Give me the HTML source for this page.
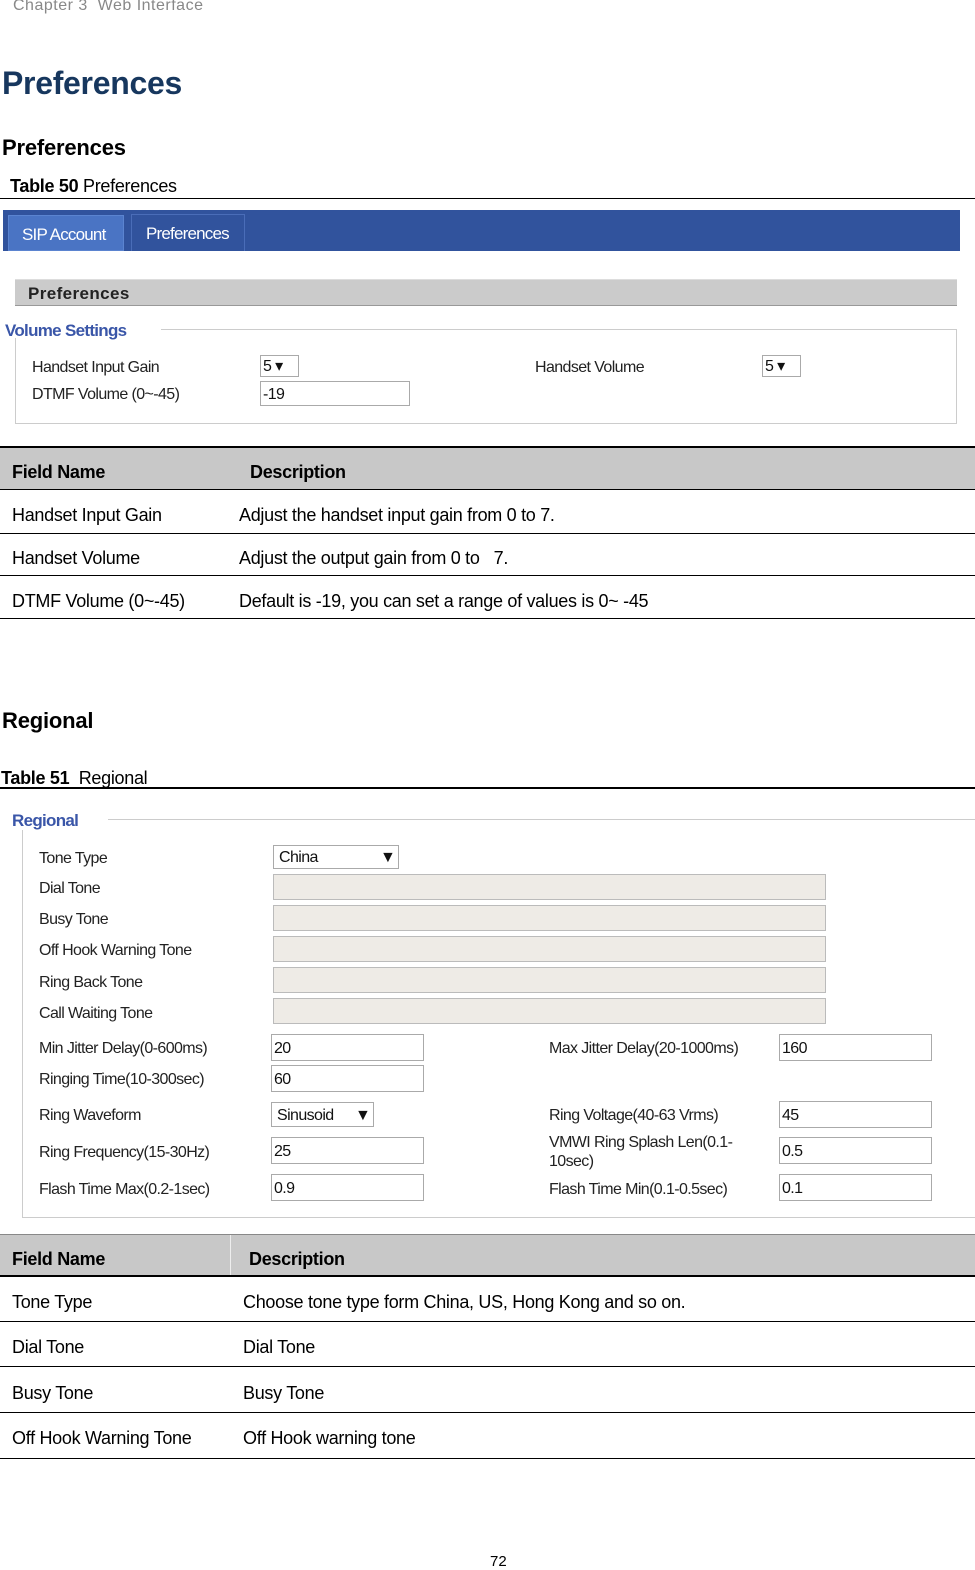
<!DOCTYPE html>
<html><head><meta charset="utf-8"><style>
*{margin:0;padding:0;box-sizing:border-box}
body{width:975px;height:1570px;background:#fff;position:relative;overflow:hidden;font-family:"Liberation Sans",sans-serif;color:#000}
.a{position:absolute;white-space:nowrap;line-height:1}
.d{font-size:18px;letter-spacing:-0.3px;margin-top:2px}
.u{font-size:16px;letter-spacing:-0.6px;color:#222;margin-top:1px}
.box{position:absolute;border:1px solid #aaa;background:#fff}
.gb{position:absolute;border:1px solid #bbb;background:#eeebe6}
.hl{position:absolute;height:1px;background:#000;left:0;width:975px}
.v{font-size:16px;letter-spacing:-0.6px;position:absolute;left:2px;top:3px;line-height:1;color:#111}
</style></head><body>
<div class="a" style="left:13px;top:-2px;font-size:16px;color:#888;letter-spacing:0.5px">Chapter 3&nbsp; Web Interface</div>
<div class="a" style="left:2px;top:67px;font-size:32px;font-weight:bold;color:#17375e;letter-spacing:-0.3px">Preferences</div>
<div class="a" style="left:2px;top:137px;font-size:22px;font-weight:bold;letter-spacing:-0.2px">Preferences</div>
<div class="a d" style="left:10px;top:175px"><b>Table 50</b> Preferences</div>
<div class="hl" style="top:198px"></div>

<div style="position:absolute;left:3px;top:210px;width:957px;height:41px;background:#31539d"></div>
<div style="position:absolute;left:8px;top:215px;width:116px;height:36px;background:#4a74c4;border:1px solid #5b84d0"></div>
<div style="position:absolute;left:131px;top:214px;width:114px;height:37px;background:#31539d;border:1px solid #4a6db8;border-bottom:none"></div>
<div class="a" style="left:22px;top:226px;font-size:17px;color:#fff;letter-spacing:-0.8px">SIP Account</div>
<div class="a" style="left:146px;top:225px;font-size:17px;color:#fff;letter-spacing:-0.8px">Preferences</div>

<div style="position:absolute;left:15px;top:279px;width:942px;height:27px;background:#cbcbcb;border-bottom:1px solid #999;border-top:1px solid #ddd"></div>
<div class="a" style="left:28px;top:285px;font-size:17px;font-weight:bold;color:#222;letter-spacing:0.4px">Preferences</div>

<div style="position:absolute;left:15px;top:329px;width:942px;height:95px;border:1px solid #ccc"></div>
<div style="position:absolute;left:3px;top:320px;width:158px;height:18px;background:#fff"></div>
<div class="a" style="left:5px;top:322px;font-size:17px;font-weight:bold;color:#3a56a8;letter-spacing:-0.7px">Volume Settings</div>
<div class="a u" style="left:32px;top:359px">Handset Input Gain</div>
<div class="a u" style="left:32px;top:386px">DTMF Volume (0~-45)</div>
<div class="a u" style="left:535px;top:359px">Handset Volume</div>
<div class="box" style="left:260px;top:355px;width:39px;height:22px"><span class="v">5 ▾</span></div>
<div class="box" style="left:260px;top:381px;width:150px;height:25px"><span class="v" style="top:5px">-19</span></div>
<div class="box" style="left:762px;top:355px;width:39px;height:22px"><span class="v">5 ▾</span></div>

<div style="position:absolute;left:0;top:446px;width:975px;height:44px;background:#c8c8c8;border-top:2px solid #000;border-bottom:1px solid #000"></div>
<div class="a d" style="left:12px;top:461px;font-weight:bold">Field Name</div>
<div class="a d" style="left:250px;top:461px;font-weight:bold">Description</div>
<div class="a d" style="left:12px;top:504px">Handset Input Gain</div>
<div class="a d" style="left:239px;top:504px">Adjust the handset input gain from 0 to 7.</div>
<div class="hl" style="top:533px"></div>
<div class="a d" style="left:12px;top:547px">Handset Volume</div>
<div class="a d" style="left:239px;top:547px">Adjust the output gain from 0 to &nbsp; 7.</div>
<div class="hl" style="top:575px"></div>
<div class="a d" style="left:12px;top:590px">DTMF Volume (0~-45)</div>
<div class="a d" style="left:239px;top:590px">Default is -19, you can set a range of values is 0~ -45</div>
<div class="hl" style="top:618px"></div>

<div class="a" style="left:2px;top:710px;font-size:22px;font-weight:bold;letter-spacing:-0.2px">Regional</div>
<div class="a d" style="left:1px;top:767px"><b>Table 51</b>&nbsp; Regional</div>
<div class="hl" style="top:787px;height:2px"></div>

<div style="position:absolute;left:22px;top:819px;width:960px;height:399px;border:1px solid #ccc;border-right:none"></div>
<div style="position:absolute;left:10px;top:808px;width:98px;height:22px;background:#fff"></div>
<div class="a" style="left:12px;top:812px;font-size:17px;font-weight:bold;color:#3a56a8;letter-spacing:-0.7px">Regional</div>

<div class="a u" style="left:39px;top:850px">Tone Type</div>
<div class="a u" style="left:39px;top:880px">Dial Tone</div>
<div class="a u" style="left:39px;top:911px">Busy Tone</div>
<div class="a u" style="left:39px;top:942px">Off Hook Warning Tone</div>
<div class="a u" style="left:39px;top:974px">Ring Back Tone</div>
<div class="a u" style="left:39px;top:1005px">Call Waiting Tone</div>
<div class="box" style="left:273px;top:845px;width:126px;height:24px"><span class="v" style="left:5px;top:4px">China</span><span class="v" style="left:106px;top:4px">▼</span></div>
<div class="gb" style="left:273px;top:874px;width:553px;height:26px"></div>
<div class="gb" style="left:273px;top:905px;width:553px;height:26px"></div>
<div class="gb" style="left:273px;top:936px;width:553px;height:26px"></div>
<div class="gb" style="left:273px;top:967px;width:553px;height:26px"></div>
<div class="gb" style="left:273px;top:998px;width:553px;height:26px"></div>

<div class="a u" style="left:39px;top:1040px">Min Jitter Delay(0-600ms)</div>
<div class="a u" style="left:39px;top:1071px">Ringing Time(10-300sec)</div>
<div class="a u" style="left:39px;top:1107px">Ring Waveform</div>
<div class="a u" style="left:39px;top:1144px">Ring Frequency(15-30Hz)</div>
<div class="a u" style="left:39px;top:1181px">Flash Time Max(0.2-1sec)</div>
<div class="box" style="left:271px;top:1034px;width:153px;height:27px"><span class="v" style="top:6px">20</span></div>
<div class="box" style="left:271px;top:1065px;width:153px;height:27px"><span class="v" style="top:6px">60</span></div>
<div class="box" style="left:271px;top:1102px;width:103px;height:25px"><span class="v" style="left:5px;top:5px">Sinusoid</span><span class="v" style="left:83px;top:5px">▼</span></div>
<div class="box" style="left:271px;top:1137px;width:153px;height:27px"><span class="v" style="top:6px">25</span></div>
<div class="box" style="left:271px;top:1174px;width:153px;height:27px"><span class="v" style="top:6px">0.9</span></div>

<div class="a u" style="left:549px;top:1040px">Max Jitter Delay(20-1000ms)</div>
<div class="a u" style="left:549px;top:1107px">Ring Voltage(40-63 Vrms)</div>
<div class="a u" style="left:549px;top:1134px">VMWI Ring Splash Len(0.1-</div>
<div class="a u" style="left:549px;top:1153px">10sec)</div>
<div class="a u" style="left:549px;top:1181px">Flash Time Min(0.1-0.5sec)</div>
<div class="box" style="left:779px;top:1034px;width:153px;height:27px"><span class="v" style="top:6px">160</span></div>
<div class="box" style="left:779px;top:1101px;width:153px;height:27px"><span class="v" style="top:6px">45</span></div>
<div class="box" style="left:779px;top:1137px;width:153px;height:27px"><span class="v" style="top:6px">0.5</span></div>
<div class="box" style="left:779px;top:1174px;width:153px;height:27px"><span class="v" style="top:6px">0.1</span></div>

<div style="position:absolute;left:0;top:1234px;width:975px;height:43px;background:#c8c8c8;border-top:1px solid #888;border-bottom:2px solid #000"></div>
<div style="position:absolute;left:230px;top:1235px;width:1px;height:40px;background:#eee"></div>
<div class="a d" style="left:12px;top:1248px;font-weight:bold">Field Name</div>
<div class="a d" style="left:249px;top:1248px;font-weight:bold">Description</div>
<div class="a d" style="left:12px;top:1291px">Tone Type</div>
<div class="a d" style="left:243px;top:1291px">Choose tone type form China, US, Hong Kong and so on.</div>
<div class="hl" style="top:1321px"></div>
<div class="a d" style="left:12px;top:1336px">Dial Tone</div>
<div class="a d" style="left:243px;top:1336px">Dial Tone</div>
<div class="hl" style="top:1366px"></div>
<div class="a d" style="left:12px;top:1382px">Busy Tone</div>
<div class="a d" style="left:243px;top:1382px">Busy Tone</div>
<div class="hl" style="top:1412px"></div>
<div class="a d" style="left:12px;top:1427px">Off Hook Warning Tone</div>
<div class="a d" style="left:243px;top:1427px">Off Hook warning tone</div>
<div class="hl" style="top:1458px"></div>

<div class="a" style="left:490px;top:1554px;font-size:15px">72</div>
</body></html>
